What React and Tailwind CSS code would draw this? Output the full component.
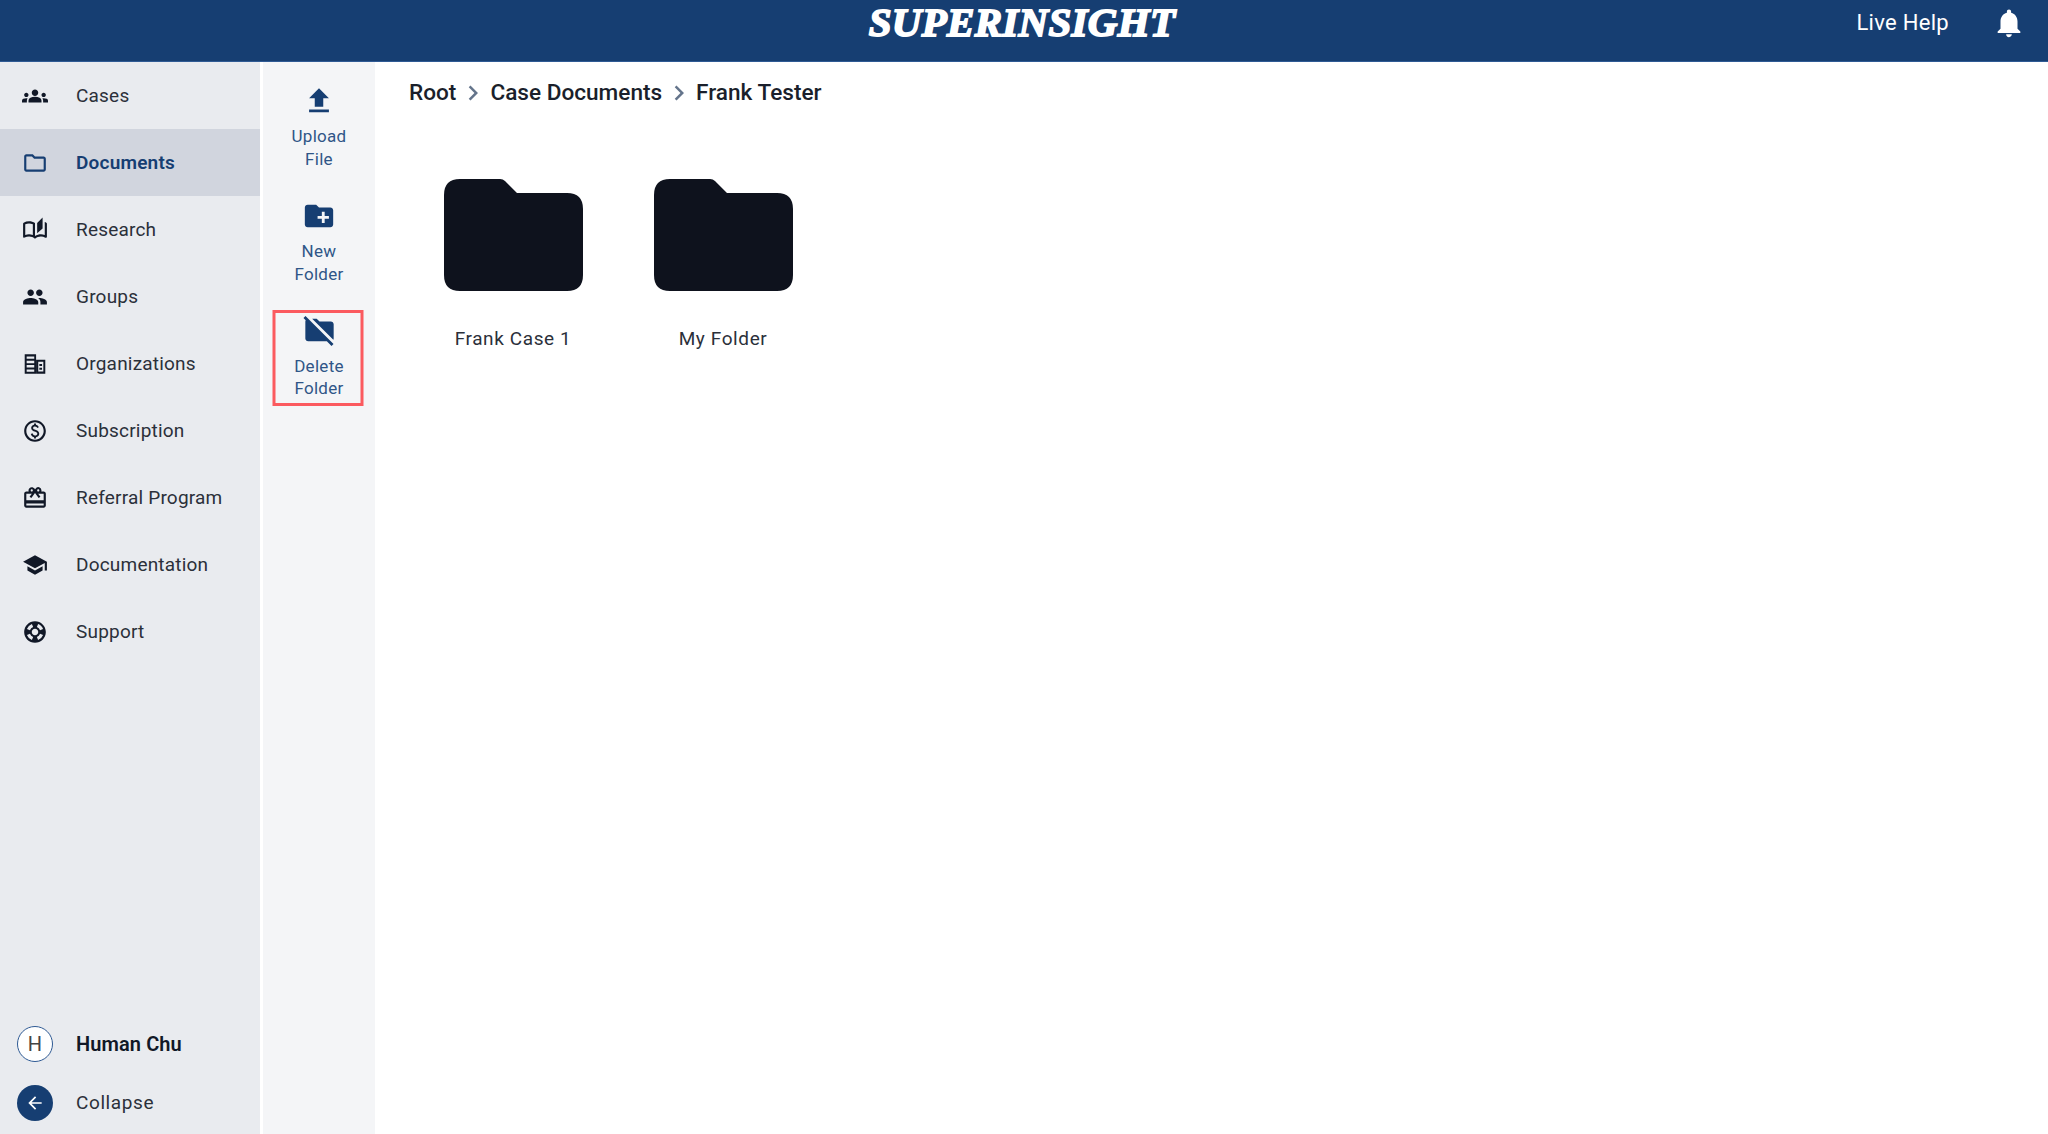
import React from 'react';
import {
  MdGroups,
  MdOutlineFolder,
  MdOutlineAutoStories,
  MdPeople,
  MdOutlinePaid,
  MdOutlineRedeem,
  MdSchool,
  MdOutlineSupport,
  MdFileUpload,
  MdCreateNewFolder,
  MdFolderOff,
  MdNotifications,
  MdArrowBack,
  MdChevronRight,
} from 'react-icons/md';

// Icono de organizaciones: dos bloques de edificio
const OrgIcon = ({ className }) => (
  <svg viewBox="0 0 24 24" className={className} fill="currentColor">
    <path d="M2.500 3h10.500v18H2.500zM4.300 5v2.200h7V5zm0 4v2.200h7V9zm0 4v2.200h7V13zm0 4v2.200h7V17z" fillRule="evenodd" />
    <path d="M13 8h8.500v13H13zM15 10v9h4.700v-9zM16 12h2.500v1.800H16zM16 15.500h2.500v1.800H16z" fillRule="evenodd" />
  </svg>
);

const NAV_ITEMS = [
  { label: 'Cases', Icon: MdGroups },
  { label: 'Documents', Icon: MdOutlineFolder, active: true },
  { label: 'Research', Icon: MdOutlineAutoStories },
  { label: 'Groups', Icon: MdPeople },
  { label: 'Organizations', Icon: OrgIcon },
  { label: 'Subscription', Icon: MdOutlinePaid },
  { label: 'Referral Program', Icon: MdOutlineRedeem },
  { label: 'Documentation', Icon: MdSchool },
  { label: 'Support', Icon: MdOutlineSupport },
];

const ACTIONS = [
  { lines: ['Upload', 'File'], Icon: MdFileUpload },
  { lines: ['New', 'Folder'], Icon: MdCreateNewFolder },
  { lines: ['Delete', 'Folder'], Icon: MdFolderOff, highlighted: true },
];

const FOLDERS = ['Frank Case 1', 'My Folder'];
const CRUMBS = ['Root', 'Case Documents', 'Frank Tester'];

const Header = () => (
  <header className="relative flex h-[62px] shrink-0 items-start justify-center border-b border-[#2f5a94] bg-[#163e72] text-white">
    <span className="mr-[4px] text-[41px] leading-[44px] font-bold italic tracking-[0.3px] [font-family:'Liberation_Serif',serif] [-webkit-text-stroke:1.8px_white]">
      SUPERINSIGHT
    </span>
    <div className="absolute top-0 right-[22px] flex h-[45px] items-center">
      <span className="text-[22px] tracking-[0.3px]">Live Help</span>
      <MdNotifications className="ml-[43px] size-[34px]" />
    </div>
  </header>
);

const Sidebar = () => (
  <aside className="flex w-[260px] shrink-0 flex-col bg-[#e9ebef]">
    <nav className="flex flex-col">
      {NAV_ITEMS.map(({ label, Icon, active }) => (
        <div
          key={label}
          className={`flex h-[67px] items-center ${active ? 'bg-[#d1d5de] text-[#163e72]' : 'text-[#2b303a]'}`}
        >
          <div className="w-[76px] pl-[22px]">
            <Icon className={`size-[26px] ${active ? 'text-[#163e72]' : 'text-[#111827]'}`} />
          </div>
          <span className={`pt-[2px] text-[19px] tracking-[0.2px] ${active ? 'font-semibold' : ''}`}>{label}</span>
        </div>
      ))}
    </nav>
    <div className="mt-auto flex flex-col gap-[23px] pb-[13px]">
      <div className="flex items-center pl-[17px]">
        <div className="flex size-[36px] items-center justify-center rounded-full border border-[#2f5a94] bg-white text-[20px] text-[#444]">
          H
        </div>
        <span className="ml-[23px] text-[20px] font-semibold tracking-[0.1px] text-[#111827]">Human Chu</span>
      </div>
      <div className="flex items-center pl-[17px]">
        <div className="flex size-[36px] items-center justify-center rounded-full bg-[#163e72] text-white">
          <MdArrowBack className="size-[20px]" />
        </div>
        <span className="ml-[23px] text-[19px] tracking-[0.6px] text-[#2b303a]">Collapse</span>
      </div>
    </div>
  </aside>
);

const ActionPanel = () => (
  <div className="ml-[3px] flex w-[112px] shrink-0 flex-col items-center bg-[#f4f5f7] pt-[22px] text-[#2f5587]">
    {ACTIONS.map(({ lines, Icon, highlighted }) => (
      <div
        key={lines[0]}
        className={`flex flex-col items-center text-center text-[17px] leading-[22.500px] tracking-[0.3px] ${
          highlighted
            ? 'mt-[-4px] h-[96px] w-[91px] -translate-x-[1.500px] border-[3px] border-[#fb5a5f] pl-[3px]'
            : 'mb-[16px] h-[99px] w-[90px]'
        }`}
      >
        <Icon className="size-[34px] shrink-0 text-[#163e72]" />
        <span className={highlighted ? 'mt-[8px] leading-[22px]' : 'mt-[7px]'}>{lines[0]}</span>
        <span>{lines[1]}</span>
      </div>
    ))}
  </div>
);

const FolderCard = ({ name }) => (
  <div className="flex w-[210px] flex-col items-center">
    <svg viewBox="0 0 139 112" className="h-[112px] w-[139px]" fill="#0e121d">
      <path d="M16 0h40q3 0 5 2l12 12h50q16 0 16 16v66q0 16-16 16H16q-16 0-16-16V16Q0 0 16 0z" />
    </svg>
    <span className="mt-[34px] text-[19px] tracking-[0.6px] text-[#2b303a]">{name}</span>
  </div>
);

const App = () => (
  <div className="flex h-[1134px] w-[2048px] flex-col overflow-hidden bg-white [font-family:Roboto,sans-serif]">
    <Header />
    <div className="flex min-h-0 flex-1">
      <Sidebar />
      <ActionPanel />
      <main className="flex-1 pt-[16px] pl-[34px]">
        {/* Migas de pan */}
        <div className="flex items-center text-[22.6px] leading-[28px] font-medium text-[#1a1f2b]">
          {CRUMBS.map((crumb, i) => (
            <React.Fragment key={crumb}>
              {i > 0 && <MdChevronRight className="mx-[2px] size-[30px] text-[#64748b]" />}
              <span>{crumb}</span>
            </React.Fragment>
          ))}
        </div>
        {/* Carpetas */}
        <div className="mt-[71px] ml-[-1px] flex">
          {FOLDERS.map((name) => (
            <FolderCard key={name} name={name} />
          ))}
        </div>
      </main>
    </div>
  </div>
);

export default App;
